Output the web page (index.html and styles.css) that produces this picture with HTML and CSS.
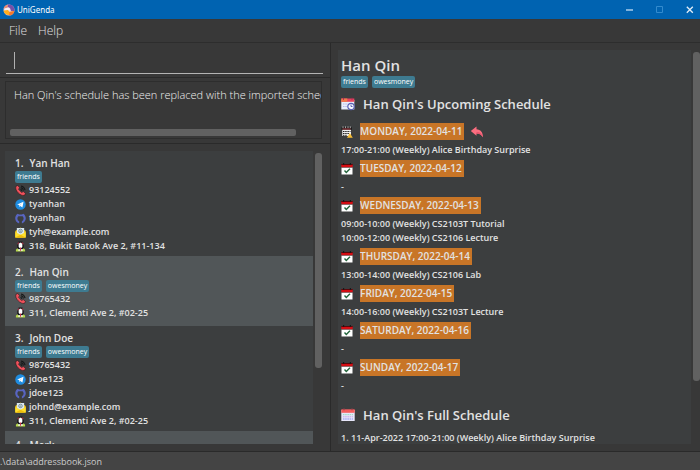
FILE: index.html
```html
<!DOCTYPE html>
<html lang="en">
<head>
<meta charset="utf-8">
<title>UniGenda</title>
<link rel="stylesheet" href="styles.css">
</head>
<body>
<svg class="defs" aria-hidden="true">
  <symbol id="phone" viewBox="0 0 12 12">
    <path d="M1 1.500 3 .5 5 3 3.800 4.600 7.200 8.200 9 7.200l2.500 2L10.300 11.300C6 12.500-.5 6 1 1.500Z" fill="#f0525c" stroke="#2a1517" stroke-width=".6"/>
    <path d="M6 4.800A2 2 0 0 1 7.500 6.400M6.300 2.900A4 4 0 0 1 9.300 6M6.600 1A6 6 0 0 1 11 5.500" fill="none" stroke="#17191a" stroke-width="1.200"/>
  </symbol>
  <symbol id="telegram" viewBox="0 0 12 12">
    <circle cx="6" cy="6" r="5.700" fill="#1e8ce0"/>
    <path d="m2.300 5.900 7-2.900-1.200 6.200-2.200-1.600-1 1-.3-2Z" fill="#fff"/>
    <path d="m4.700 6.700 3.200-2.300-2.300 2.700Z" fill="#a9cdeb"/>
  </symbol>
  <symbol id="github" viewBox="0 0 12 12">
    <path d="M4.500 11.400C-1 10-.8 2.800 3 .8L4.400 1.600h3.200L9 .8C12.800 2.800 13 10 7.500 11.400V9C10 8.200 9.800 4.200 8 3.500H4C2.200 4.200 2 8.200 4.500 9Z" fill="#5865c0"/>
    <path d="m1.500 8.300 1.300 1.500h1.700" fill="none" stroke="#5865c0"/>
  </symbol>
  <symbol id="mail" viewBox="0 0 12 12">
    <path d="M.3 4.300 6 .5l5.700 3.800v7.200H.3Z" fill="#f3c411"/>
    <path d="M2 1.200h8v6.700L6 9.500 2 7.900Z" fill="#dbe9ee"/>
    <circle cx="6" cy="4.300" r="1.900" fill="none" stroke="#526b78" stroke-width=".8"/>
    <circle cx="6" cy="4.300" r=".6" fill="#526b78"/>
    <path d="m.3 5.500 5.700 3 5.700-3v6H.3Z" fill="#ffe02e"/>
    <path d="m.3 11.500 5.700-3 5.700 3Z" fill="#f0bd0b"/>
  </symbol>
  <symbol id="home" viewBox="0 0 12 12">
    <path d="M1 9.500 2.500 8h7L11 9.500v2H1Z" fill="#b6d84b"/>
    <path d="M2.500 4 4 .5h4L9.500 4v3.500L8 9.500H4L2.500 7.500Z" fill="#18191a"/>
    <path d="M4 3 6 1.500 8 3v3.500L6 8.500 4 6.500Z" fill="#fff"/>
    <path d="M3 3.500 4.200 1.500M7.800 1.500 9 3.500M6 7v3" stroke="#d83452" stroke-width="1"/>
    <path d="M3.500 9h5v1.500h-5Z" fill="#fff"/><path d="M5.500 7.500h1v3h-1Z" fill="#c82b49"/>
  </symbol>
  <symbol id="check" viewBox="0 0 12 12">
    <path d="M.5 4h11v7.500H.5Z" fill="#fff"/>
    <path d="M.3 1h11.400v3.200H.3Z" fill="#d40d13"/>
    <path d="M.3 1h11.400v.8H.3ZM.3 3.900h11.400v.5H.3Z" fill="#360407"/>
    <path d="M2 0h1.200v1.900H2ZM8.800 0H10v1.900H8.800Z" fill="#191919"/>
    <path d="m3.500 7.500 1.800 2L9 5.800" fill="none" stroke="#23653c" stroke-width="1.400"/>
  </symbol>
  <symbol id="today" viewBox="0 0 12 12">
    <path d="M.8 1.500h9.700v9H.8Z" fill="#eee" stroke="#171717" stroke-width=".7"/>
    <path d="M.5 1.300h10.300v2.500H.5Z" fill="#171717"/>
    <path d="M2 .4v1.800M4.500.4v1.800M7 .4v1.800M9.300.4v1.800" stroke="#ddd" stroke-width=".7"/>
    <path d="M2 5.500h7.500M2 7.500h6M2 9.300h4" stroke="#222" stroke-width="1" stroke-dasharray="1.500 .7"/>
    <path d="M1.500 3h8" stroke="#dc414c" stroke-width=".7"/>
    <path d="m8.800 7 3 4.700H6Z" fill="#f7bd35"/>
  </symbol>
  <symbol id="upcoming" viewBox="0 0 14 14">
    <path d="M.3 3h13v9.500H.3Z" fill="#eaf0fb"/>
    <path d="M.3 1.500h13v3.300H.3Z" fill="#e9435e"/><path d="M.3 1.500h6v3.300h-6Z" fill="#f17b4a"/>
    <path d="M2.500.8v2M11 .8v2" stroke="#a92757"/>
    <path d="M2 7h5M2 9.500h4" stroke="#b5b9e9" stroke-width="1.200" stroke-dasharray="1.500 .8"/>
    <circle cx="10" cy="9.500" r="3.200" fill="#f8faff" stroke="#5961b4" stroke-width="1.200"/>
    <path d="M10 7.500v2h1.500" fill="none" stroke="#5961b4"/>
  </symbol>
  <symbol id="full" viewBox="0 0 14 14">
    <path d="M.3 2h13.400v11H.3Z" fill="#e7e7fa"/>
    <path d="M.3 1.300h13.400v3.500H.3Z" fill="#f65d5e"/>
    <path d="M3 .3v2M11 .3v2" stroke="#933e4b"/>
    <path d="M2 6.700h10" stroke="#91d9bc" stroke-dasharray="1.500 .7"/>
    <path d="M2 8.800h10" stroke="#c6a1e8" stroke-dasharray="1.500 .7"/>
    <path d="M2 11h10" stroke="#898cf0" stroke-dasharray="1.500 .7"/>
  </symbol>
  <symbol id="reply" viewBox="0 0 14 12">
    <path d="M.8 5 6.500.5v2.800c4 .2 6.500 3 6.500 8C11 8.500 9 7.500 6.500 7.500v2.300Z" fill="#fb6e80"/>
    <path d="M6.500 7.500c2.500 0 4.500 1 6.500 3.800-1-3.500-3-5.300-6.500-5.300Z" fill="#e6536c"/>
  </symbol>
</svg>

<header class="titlebar">
  <svg class="logo" viewBox="0 0 12 12" aria-hidden="true">
    <circle cx="6" cy="6" r="5.500" fill="#d9cbe0"/>
    <path d="M5 .6a5.500 5.500 0 0 1 6.300 6.700L8 7 7 4 4 3Z" fill="#7650a8"/>
    <path d="M.6 5A5.500 5.500 0 0 1 5 .6L4.500 3.500Z" fill="#e98b73"/>
    <path d="M1.500 4.500 6 3.500l1.500 3-6 .5Z" fill="#f4eef2"/>
    <path d="M.6 6.500 5 6l1.500 2L11.300 7A5.500 5.500 0 0 1 .6 6.500Z" fill="#ffae1c"/>
    <path d="m6.500 8 4.800-1A5.500 5.500 0 0 1 6 11.500Z" fill="#f4772f"/>
  </svg>
  <span class="app-name">UniGenda</span>
  <div class="window-buttons">
    <button aria-label="Minimize"><svg viewBox="0 0 8 8"><path d="M0 4h7" stroke="#a9cdec" stroke-width="1.500"/></svg></button>
    <button aria-label="Maximize"><svg viewBox="0 0 8 8"><path d="M.5.5h6v6h-6Z" fill="none" stroke="#338bce"/></svg></button>
    <button aria-label="Close"><svg viewBox="0 0 8 8"><path d="m.8.8 6 6m0-6-6 6" stroke="#e0edf8" stroke-width="1.300"/></svg></button>
  </div>
</header>
<nav class="menu"><button>File</button><button>Help</button></nav>

<main class="content">
  <div class="left">
    <div class="command"><div class="command-line"><span class="caret"></span><input aria-label="Command" type="text"></div></div>
    <div class="result">
      <div class="result-box">
        <output class="result-text">Han Qin's schedule has been replaced with the imported schedule</output>
        <div class="bar-horizontal"></div>
      </div>
    </div>
    <div class="people">
      <ul class="cards">
        <li class="card">
          <h3><span>1.</span>Yan Han</h3>
          <div class="tags"><span>friends</span></div>
          <p><svg><use href="#phone"/></svg>93124552</p>
          <p><svg><use href="#telegram"/></svg>tyanhan</p>
          <p><svg><use href="#github"/></svg>tyanhan</p>
          <p><svg><use href="#mail"/></svg>tyh@example.com</p>
          <p><svg><use href="#home"/></svg>318, Bukit Batok Ave 2, #11-134</p>
        </li>
        <li class="card">
          <h3><span>2.</span>Han Qin</h3>
          <div class="tags"><span>friends</span><span>owesmoney</span></div>
          <p><svg><use href="#phone"/></svg>98765432</p>
          <p><svg><use href="#home"/></svg>311, Clementi Ave 2, #02-25</p>
        </li>
        <li class="card">
          <h3><span>3.</span>John Doe</h3>
          <div class="tags"><span>friends</span><span>owesmoney</span></div>
          <p><svg><use href="#phone"/></svg>98765432</p>
          <p><svg><use href="#telegram"/></svg>jdoe123</p>
          <p><svg><use href="#github"/></svg>jdoe123</p>
          <p><svg><use href="#mail"/></svg>johnd@example.com</p>
          <p><svg><use href="#home"/></svg>311, Clementi Ave 2, #02-25</p>
        </li>
        <li class="card">
          <h3><span>4.</span>Mark</h3>
        </li>
      </ul>
      <div class="track"><div class="thumb thumb-people"></div></div>
    </div>
  </div>

  <div class="right">
    <section class="details">
      <h1>Han Qin</h1>
      <div class="tags"><span>friends</span><span>owesmoney</span></div>
      <h2><svg><use href="#upcoming"/></svg>Han Qin's Upcoming Schedule</h2>
      <div class="day"><h4><svg><use href="#today"/></svg><span>MONDAY, 2022-04-11</span><svg class="reply"><use href="#reply"/></svg></h4><p>17:00-21:00 (Weekly) Alice Birthday Surprise</p></div>
      <div class="day"><h4><svg><use href="#check"/></svg><span>TUESDAY, 2022-04-12</span></h4><p>-</p></div>
      <div class="day"><h4><svg><use href="#check"/></svg><span>WEDNESDAY, 2022-04-13</span></h4><p>09:00-10:00 (Weekly) CS2103T Tutorial</p><p>10:00-12:00 (Weekly) CS2106 Lecture</p></div>
      <div class="day"><h4><svg><use href="#check"/></svg><span>THURSDAY, 2022-04-14</span></h4><p>13:00-14:00 (Weekly) CS2106 Lab</p></div>
      <div class="day"><h4><svg><use href="#check"/></svg><span>FRIDAY, 2022-04-15</span></h4><p>14:00-16:00 (Weekly) CS2103T Lecture</p></div>
      <div class="day"><h4><svg><use href="#check"/></svg><span>SATURDAY, 2022-04-16</span></h4><p>-</p></div>
      <div class="day"><h4><svg><use href="#check"/></svg><span>SUNDAY, 2022-04-17</span></h4><p>-</p></div>
      <h2 class="full"><svg><use href="#full"/></svg>Han Qin's Full Schedule</h2>
      <p>1. 11-Apr-2022 17:00-21:00 (Weekly) Alice Birthday Surprise</p>
    </section>
    <div class="track"><div class="thumb thumb-details"></div></div>
  </div>
</main>
<footer class="status">.\data\addressbook.json</footer>
</body>
</html>
```
FILE: styles.css
```css
* { box-sizing: border-box; margin: 0; padding: 0; }
body {
  height: 100vh;
  display: flex;
  flex-direction: column;
  overflow: hidden;
  background: #383838;
  color: #e2e2e2;
  font: 600 9px/14px "Open Sans", "Noto Sans", sans-serif;
}
button, input { font: inherit; color: inherit; background: none; border: 0; outline: 0; }
svg { flex: none; }
.defs { position: absolute; width: 0; height: 0; }

.titlebar { flex: none; height: 19px; display: flex; align-items: center; padding-left: 3px; background: #0063b1; }
.logo { width: 12px; height: 12px; margin-right: 2px; }
.app-name { font-family: "Noto Sans", sans-serif; font-size: 8px; font-weight: 400; color: #fff; }
.window-buttons { margin: 0 -5px 0 auto; display: flex; }
.window-buttons button { width: 30px; height: 18px; display: flex; align-items: center; justify-content: center; }
.window-buttons svg { width: 8px; height: 8px; }

.menu { flex: none; height: 24px; display: flex; gap: 11px; padding-left: 9px; border-bottom: 1px solid #2d2d2d; }
.menu button { font-size: 12px; font-weight: 300; color: #e0e0e0; }

.content { flex: 1; min-height: 0; display: flex; }
.left { flex: none; width: 47.3%; display: flex; flex-direction: column; border-right: 1px solid #2a2a2a; }
.right { flex: 1; min-width: 0; display: flex; padding: 7px 0 7px 7px; }

.command { flex: none; height: 35px; padding: 0 7px 4px 6px; border-bottom: 1px solid #2a2a2a; }
.command-line { height: 31px; display: flex; align-items: center; gap: 2px; padding: 4px 0 0 8px; border-bottom: 1px solid #b4b4b4; }
.command-line input { flex: 1; min-width: 0; }
.caret { width: 1px; height: 17px; background: #b0b0b0; }

.result { flex: none; height: 66px; padding: 3px 8px 4px 5px; border-bottom: 1px solid #2a2a2a; }
.result-box { height: 100%; display: flex; flex-direction: column; justify-content: space-between; padding: 6px 0 2px 4px; border: 1px solid #2d2d2d; }
.result-text { padding-left: 4px; overflow: hidden; white-space: nowrap; font-size: 11px; font-weight: 300; color: #f0f0f0; }
.bar-horizontal { width: 92%; height: 7px; border-radius: 2px; background: #616161; }

.people { flex: 1; min-height: 0; display: flex; padding: 7px 8px 7px 5px; }
.cards { flex: 1; min-width: 0; overflow: hidden; list-style: none; }
.card { min-height: 70px; display: flex; flex-direction: column; justify-content: center; padding: 4px 10px 3px; background: #3c3e3f; }
.card:nth-child(even) { background: #515658; }
.card h3 { display: flex; gap: 6px; font: inherit; font-size: 10px; line-height: 16px; }
.card p { display: flex; align-items: center; gap: 3px; white-space: nowrap; }
.card:last-child { justify-content: flex-start; padding-top: 6px; }
.card p svg { width: 11px; height: 11px; }

.tags { display: flex; gap: 4px; height: 12px; }
.tags span { height: 12px; padding: 0 2px; border-radius: 2px; background: #3e7b91; font-size: 7px; line-height: 12px; font-weight: 400; color: #fff; }

.track { flex: none; width: 9px; padding: 2px 0 0 2px; }
.thumb { width: 7px; border-radius: 3px; background: #616161; }
.thumb-people { height: 74%; }
.thumb-details { height: 84%; }

.details { flex: 1; min-width: 0; overflow: hidden; padding: 5px 3px 0; background: #3c3e3f; white-space: nowrap; }
.details h1 { font-size: 15px; line-height: 21px; font-weight: 600; }
.details h2 { display: flex; align-items: center; gap: 8px; height: 32px; font-size: 13px; font-weight: 600; }
.details h2 svg { width: 14px; height: 14px; }
.details .full { margin-top: 6px; }
.day h4 { display: flex; align-items: center; height: 23px; font-size: 10px; font-weight: 400; }
.day h4 svg { width: 12px; height: 12px; margin-right: 7px; }
.day h4 span { padding-right: 2px; background: #c87527; line-height: 17px; font-weight: 600; }
.day h4 .reply { width: 14px; margin-left: 6px; }

.status { flex: none; height: 19px; line-height: 20px; border-top: 1px solid #2a2a2a; background: #444; font-weight: 400; color: #ccc; }
```
